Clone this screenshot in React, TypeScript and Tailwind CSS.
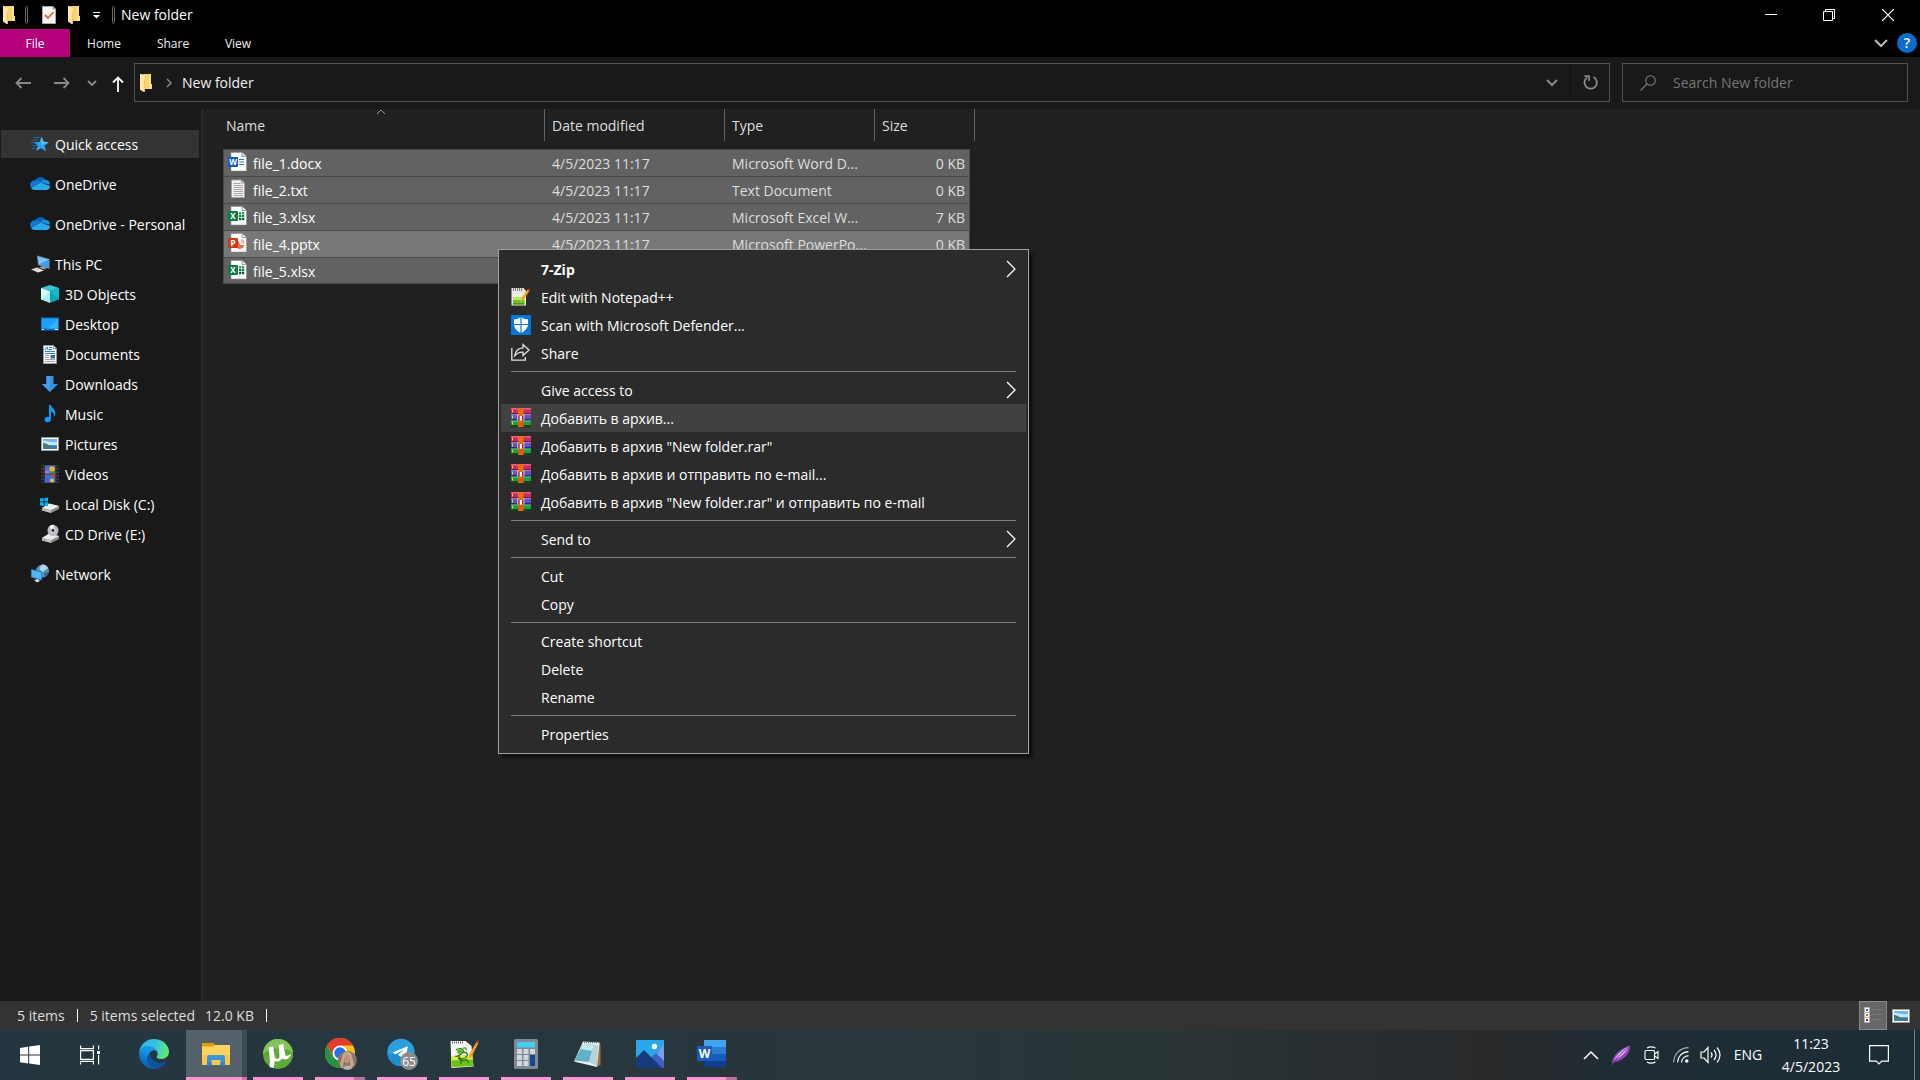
import type { ReactNode } from "react";
import clsx from "clsx";

type IconProps = { className?: string };

/* ---------- small glyphs ---------- */

const FolderIcon = ({ className = "w-3 h-[18px]" }: IconProps) => (
  <svg viewBox="0 0 12 18" className={className} aria-hidden="true">
    <path d="M3 0h8v10h1v5H3z" fill="#f7d471" />
    <path d="M9 0h2v10h1v5H9z" fill="#fbdf8b" />
    <path d="M0 0h2l3 3v14.500L3.500 18 0 15.500z" fill="#ffe9a8" />
    <path d="M3.800 6 5 5v12.500L3.800 18z" fill="#f1c85c" />
  </svg>
);

const CheckDocIcon = () => (
  <svg viewBox="0 0 14 18" className="w-[14px] h-[18px]" aria-hidden="true">
    <path d="M.5.5H11L13.500 3v14.500H.5z" fill="#f7f7f7" stroke="#a9a9a9" />
    <path d="M11 .5V3h2.500" fill="none" stroke="#8d8d8d" />
    <path d="m3 9 3 3 5.500-6" fill="none" stroke="#e8622a" strokeWidth="1.800" />
  </svg>
);

const Chevron = ({ d, box, className, stroke = 1 }: { d: string; box: string; className: string; stroke?: number }) => (
  <svg viewBox={box} className={className} fill="none" stroke="currentColor" strokeWidth={stroke} aria-hidden="true">
    <path d={d} />
  </svg>
);

/* ---------- sidebar icons ---------- */

const QuickAccessIcon = () => (
  <svg viewBox="0 0 20 20" className="w-5 h-5" aria-hidden="true">
    <path d="m11.500 2.500 2 5.300 5.300.4-4.200 3.500 1.500 5.500-4.900-2.900L6 17l1.800-5.300L4 8.400l5.500-.5z" fill="#2aa5f5" />
    <path d="m11.500 2.500 2 5.300 5.300.4-7.600 3z" fill="#5cc0fb" />
    <path d="M3.500 3.500h6M2.500 6h5M1 8.500h4M2.500 11.500h4M1.500 14.500h4" stroke="#1477b8" strokeWidth=".9" />
  </svg>
);

const OneDriveIcon = () => (
  <svg viewBox="0 0 20 20" className="w-5 h-5" aria-hidden="true">
    <path d="M5 7a5.800 5.800 0 0 1 10.600-1.200c-2 .3-3.600 2-4.300 2.700z" fill="#0a5fb4" />
    <path d="M5.600 6.300c2.300-.2 4.200.9 5.700 2L1 13.500A4.600 4.600 0 0 1 5.600 6.300z" fill="#0f78d4" />
    <path d="M10.500 8.500c1.400-2.200 3.200-2.800 5.100-2.700a4.400 4.400 0 0 1 4.300 5z" fill="#1490df" />
    <path d="M1 13.800 10.800 8.500l8.900 3.200A3.200 3.200 0 0 1 17 16H4.500A4 4 0 0 1 1 13.800z" fill="#28a8ea" />
  </svg>
);

const ThisPcIcon = () => (
  <svg viewBox="0 0 20 20" className="w-5 h-5" aria-hidden="true">
    <path d="M7 1.500 19.500 5v10L8 11z" fill="#8a9299" />
    <path d="m8 2.700 10.700 3v8.200L9 10.500z" fill="#3aa0ef" />
    <path d="m8 2.700 10.700 3L9 10z" fill="#79c4fa" />
    <path d="m9 13.500 3-1.200 5 1.700-3 1.500z" fill="#9aa1a6" />
    <path d="m1 15.500 6-2 7 3-6 2z" fill="#dfe4e8" />
    <path d="m3 15.600 4.500-1.400M5.500 16.700l4-1.700" stroke="#9ba4ab" strokeWidth=".5" />
  </svg>
);

const ObjectsIcon = () => (
  <svg viewBox="0 0 20 20" className="w-5 h-5" aria-hidden="true">
    <path d="m10 1 9 3-9 3.500L1 4z" fill="#3bc4d2" />
    <path d="m1 4 9 3.500V19l-9-3.500z" fill="#a9eef2" />
    <path d="m1 4 9 3.500L1 15.500z" fill="#d3f8f8" />
    <path d="m19 4-9 3.500V19l9-3.500z" fill="#0fa3b7" />
    <path d="M19 4v11.500L10 7.500z" fill="#12bcd0" />
  </svg>
);

const DesktopIcon = () => (
  <svg viewBox="0 0 20 20" className="w-5 h-5" aria-hidden="true">
    <path d="M1 3.500h18v13H1z" fill="#0874bd" />
    <path d="M2 4.500h16v10H2z" fill="#18a0fb" />
    <path d="M18 4.500v10H8z" fill="#38b1ff" />
    <path d="M2 15.500h1.500M15 15.500h3" stroke="#fff" />
  </svg>
);

const DocumentsIcon = () => (
  <svg viewBox="0 0 20 20" className="w-5 h-5" aria-hidden="true">
    <path d="M3.500 1.500h10l3 3v15h-13z" fill="#f5f5f5" stroke="#9b9b9b" />
    <path d="M13.500 1.500v3h3" fill="none" stroke="#8d8d8d" />
    <path d="m5 6 2-3 1 3M9 3.500h3M9 5.500h3M5 7.500h10M5 9.500h10" fill="none" stroke="#2b8bd6" />
    <path d="M5 11.500h4M5 13.500h4M5 15.500h10M5 17.500h10" stroke="#a5a5a5" />
    <path d="M10.500 11h4.500v3.500h-4.500z" fill="#3b6f8f" />
  </svg>
);

const DownloadsIcon = () => (
  <svg viewBox="0 0 20 20" className="w-5 h-5" aria-hidden="true">
    <path d="M6.500 2h7v8H18l-8 8-8-8h4.500z" fill="#3492e4" />
    <path d="M6.500 2h3.500v16l-8-8h4.500z" fill="#459fec" />
  </svg>
);

const MusicIcon = () => (
  <svg viewBox="0 0 20 20" className="w-5 h-5" aria-hidden="true">
    <path
      d="M9 1h2c.3 3 4.500 4 4.300 8.200-.1 1.600-.8 2.800-1.600 3.500.6-3-.7-4.500-2.700-5v7.500c0 2-1.700 3.100-3.600 3.100S4.500 17 4.500 15.500c0-2 2.200-3.300 4.500-2.600z"
      fill="#0a9bf5"
    />
  </svg>
);

const PictureIcon = ({ className = "w-5 h-5" }: IconProps) => (
  <svg viewBox="0 0 20 20" className={className} aria-hidden="true">
    <path d="M1.500 3.500h17v13h-17z" fill="#fff" stroke="#9e9e9e" />
    <path d="M3 5h14v10H3z" fill="#6cb7ef" />
    <path d="M3 7c3-1 6 2 14 1v3H3z" fill="#c9e5f7" />
    <path d="M3 9c4 0 5 3 9 2.500h5V13H3z" fill="#3f7f5d" />
    <path d="M3 12.500h14V15H3z" fill="#4379a6" />
  </svg>
);

const VideosIcon = () => (
  <svg viewBox="0 0 20 20" className="w-5 h-5" aria-hidden="true">
    <path d="M1 1h18v18H1z" fill="#3c3c3c" />
    <path d="M2.500 2v16M17.500 2v16" stroke="#141414" strokeWidth="2" strokeDasharray="2 1.500" />
    <path d="M5 1.500h10v8H5zM5 10.500h10v8H5z" fill="#3f6fd0" />
    <path d="M5 6.500h4v3H5z" fill="#c06fc0" />
    <circle cx="12" cy="5" r="2.800" fill="#e5b52c" />
    <path d="M9 7.500h6v2H9z" fill="#3f8d41" />
    <path d="M10 10.500h5V13h-3z" fill="#c9422f" />
    <circle cx="12" cy="16.500" r="2" fill="#f0b93c" />
  </svg>
);

const Drive = () => (
  <>
    <path d="m2 14 7-4.500 10 2.500v3l-8 4-9-2.500z" fill="#8e8e8e" />
    <path d="m2 14 7-4.500L19 12l-8 4z" fill="#ececec" />
    <path d="M2 14.300 11 16.300v2.400l-9-2.300z" fill="#c2c2c2" />
    <path d="M3.500 16h2" stroke="#45c04a" />
  </>
);

const LocalDiskIcon = () => (
  <svg viewBox="0 0 20 20" className="w-5 h-5" aria-hidden="true">
    <Drive />
    <path d="M0 4.500 3.700 4v3.500H0zM4.500 3.900 8 3.500v4H4.500zM0 8.300h3.700V12L0 11.500zM4.500 8.300H8v4l-3.500-.4z" fill="#0db4ef" />
  </svg>
);

const CdDriveIcon = () => (
  <svg viewBox="0 0 20 20" className="w-5 h-5" aria-hidden="true">
    <Drive />
    <circle cx="13" cy="6.500" r="5.500" fill="#b9bcc0" />
    <path d="M13 6.500 9 2.700A5.500 5.500 0 0 1 14.500 1z" fill="#f3f3f3" />
    <circle cx="13" cy="6.500" r="2.500" fill="#ddd" />
    <circle cx="13" cy="6.500" r="1.400" fill="#222" />
  </svg>
);

const NetworkIcon = () => (
  <svg viewBox="0 0 20 20" className="w-5 h-5" aria-hidden="true">
    <circle cx="12.500" cy="7" r="6.500" fill="#5d93b5" />
    <path d="M12 .6a6.500 6.500 0 0 1 6 3.400c-1 2-3 1-4 3s-3 0-4-1.500 1-3 2-4.900z" fill="#b7d4e2" />
    <path d="M14 9c2-1 3.500-1 4.700-1a6.500 6.500 0 0 1-3.700 5z" fill="#2e678c" />
    <path d="m1 5 11 2.500v9L1 13.500z" fill="#1b7cc0" />
    <path d="m1.700 6 9.600 2.200v7.200L1.700 12.800z" fill="#52b6f5" />
    <path d="m4 16 4-1 2 2-3 1.500z" fill="#d4dade" />
  </svg>
);

/* ---------- file icons ---------- */

const OfficeFileIcon = ({ letter, color, children }: { letter: string; color: string; children: ReactNode }) => (
  <svg viewBox="0 0 19 20" className="w-[19px] h-5" aria-hidden="true">
    <path d="M3 .5h11l4.500 4V19H3z" fill="#fff" stroke="#8f8f8f" strokeWidth=".6" />
    <path d="M14 .5v4h4.500" fill="#e8e8e8" stroke="#777" strokeWidth=".7" />
    {children}
    <rect y="5" width="10" height="10" rx="1" fill={color} />
    <text x="5" y="13" textAnchor="middle" fontSize="8" fontWeight="700" fill="#fff">
      {letter}
    </text>
  </svg>
);

const DocxIcon = () => (
  <OfficeFileIcon letter="W" color="#185abd">
    <path d="M11 7.500h5M11 10h5M11 12.500h5" stroke="#2b7cd3" strokeWidth="1.200" />
  </OfficeFileIcon>
);

const XlsxIcon = () => (
  <OfficeFileIcon letter="X" color="#107c41">
    <path d="M11 6h2.300v2.500H11zM14 6h2.300v2.500H14z" fill="#21a366" />
    <path d="M11 9h2.300v2.300H11zM14 9h2.300v2.300H14z" fill="#107c41" />
    <path d="M11 12h2.300v2.300H11zM14 12h2.300v2.300H14z" fill="#0b5a30" />
  </OfficeFileIcon>
);

const PptxIcon = () => (
  <OfficeFileIcon letter="P" color="#c43e1c">
    <path d="M11 8a4 4 0 1 0 5 4h-4z" fill="#ed6c47" />
    <path d="M13 6a4 4 0 0 1 4 4.500h-4z" fill="#ffb49c" />
  </OfficeFileIcon>
);

const TxtIcon = () => (
  <svg viewBox="0 0 19 20" className="w-[19px] h-5" aria-hidden="true">
    <path d="M3.500 1h10l3 3v14.500h-13z" fill="#f3f3f3" stroke="#a0a0a0" strokeWidth=".8" />
    <path d="M13.500 1v3h3" fill="none" stroke="#888" strokeWidth=".8" />
    <path d="M5.500 4.500h7M5.500 6.500h9.500M5.500 8.500h9.500M5.500 10.500h9.500M5.500 12.500h9.500M5.500 14.500h9.500M5.500 16.500h9.500" stroke="#9c9c9c" strokeWidth=".9" />
  </svg>
);

/* ---------- context menu icons ---------- */

const NotepadPlusIcon = () => (
  <svg viewBox="0 0 20 20" className="w-5 h-5" aria-hidden="true">
    <path d="M.5 1h12l2.500 3v14.500H.5z" fill="#e9e9e4" />
    <path d="M2 7h11.500v10.500H2z" fill="#eef5cf" />
    <path d="M2 10h11.500v7.500H2z" fill="#bfe36a" />
    <path d="M2 13h11.500v4.500H2z" fill="#6fc02a" />
    <path d="M2 16h11.500v1.500H2z" fill="#3f9a1e" />
    <path d="M2.500 1v3M4.500 1v3M6.500 1v3M8.500 1v3M10.500 1v3" stroke="#777" />
    <path d="m9.500 15 1-4 6-8.500 2 1.300-6 9z" fill="#f5a617" />
    <path d="m16.500 2.500 1-2 2 1.300-1 2z" fill="#a11c1c" />
  </svg>
);

const DefenderIcon = () => (
  <svg viewBox="0 0 20 20" className="w-5 h-5" aria-hidden="true">
    <path d="M0 0h20v20H0z" fill="#0078d7" />
    <path d="M10 2c2 1.700 4.500 2.300 7 2.300V9c0 4-2.500 7-7 9-4.500-2-7-5-7-9V4.300C5.500 4.300 8 3.700 10 2z" fill="#fff" />
    <path d="M10 1.500V18.500M2.500 9.500h15" stroke="#0078d7" strokeWidth="1.200" />
  </svg>
);

const ShareIcon = () => (
  <svg viewBox="0 0 20 20" className="w-5 h-5" fill="none" stroke="#e6e6e6" strokeWidth="1.300" aria-hidden="true">
    <path d="M.8 5v12.200h13.500V14" />
    <path d="M12 1.500v3.300C7.500 5 4.500 8 3.700 12.800 6 10 8.500 9 12 9.200v3.300L18 7z" />
  </svg>
);

const WinRarIcon = () => (
  <svg viewBox="0 0 20 20" className="w-5 h-5" aria-hidden="true">
    <path d="M0 0h20v6H0z" fill="#cf2a5b" />
    <path d="M0 0h20v1.500H0z" fill="#ef5a80" />
    <path d="M0 5h20v1H0z" fill="#7d1233" />
    <path d="M0 6h20v6H0z" fill="#5a55c8" />
    <path d="M0 6h20v1.200H0z" fill="#8a86e2" />
    <path d="M0 11h20v1.500H0z" fill="#2c2974" />
    <path d="M0 12.500h20V18H0z" fill="#1f9a45" />
    <path d="M0 12.500h20v1.200H0z" fill="#47c26b" />
    <path d="M0 17h20v2.500H0z" fill="#17451f" />
    <path d="M1.500 1.500v3M1.500 7.500v3M1.500 13.700v3" stroke="#f2d32c" />
    <path d="M7 0h5.500v19H7z" fill="#e2701a" />
    <path d="M7 13.500h5.500V18H7z" fill="#d95a10" />
    <path d="M6 6h7.500v6.500H6z" fill="#b9b3d6" />
    <path d="M7.200 5.500h5V8h-5z" fill="#e2701a" />
    <path d="M7.200 8h1.600v4.500H7.200zM10.800 8h1.600v4.500h-1.600z" fill="#cf2020" />
    <path d="M8.800 8h2v4.500h-2z" fill="#fff" />
  </svg>
);

/* ---------- taskbar icons ---------- */

const StartIcon = () => (
  <svg viewBox="0 0 20 20" className="w-5 h-5" fill="#fff" aria-hidden="true">
    <path d="M0 2.900 8.200 1.700v7.900H0zM9.200 1.500 20 0v9.600H9.200zM0 10.600h8.200v7.800L0 17.200zM9.200 10.600H20V20L9.200 18.500z" />
  </svg>
);

const TaskViewIcon = () => (
  <svg viewBox="0 0 20 20" className="w-5 h-5" fill="none" stroke="#fff" strokeWidth="1.200" aria-hidden="true">
    <path d="M.6.500v3.200h12.800V.5M.6 19.500v-3.200h12.800v3.200M.6 5.700h12.800v8.600H.600zM18.600.5v4M18.600 10v9.500" />
    <path d="M17 6h3v3h-3z" fill="#fff" stroke="none" />
  </svg>
);

const EdgeIcon = () => (
  <svg viewBox="0 0 256 256" className="w-[30px] h-[30px]" aria-hidden="true">
    <defs>
      <linearGradient id="edge-dark" x1="60" y1="180" x2="240" y2="180" gradientUnits="userSpaceOnUse">
        <stop offset="0" stopColor="#0c59a4" />
        <stop offset="1" stopColor="#114a8b" />
      </linearGradient>
      <linearGradient id="edge-mid" x1="140" y1="70" x2="40" y2="220" gradientUnits="userSpaceOnUse">
        <stop offset="0" stopColor="#1b9de2" />
        <stop offset=".5" stopColor="#148fdd" />
        <stop offset="1" stopColor="#0a62b8" />
      </linearGradient>
      <linearGradient id="edge-top" x1="20" y1="60" x2="250" y2="130" gradientUnits="userSpaceOnUse">
        <stop offset="0" stopColor="#2fb5e8" />
        <stop offset=".5" stopColor="#36c4dc" />
        <stop offset="1" stopColor="#66eb6e" />
      </linearGradient>
    </defs>
    <g transform="translate(-4.630 -4.920)">
      <path
        fill="url(#edge-dark)"
        d="M235.680 195.460a93.730 93.730 0 0 1-10.540 4.710 101.870 101.870 0 0 1-35.900 6.460c-47.320 0-88.540-32.550-88.540-74.320a31.480 31.480 0 0 1 16.430-27.610c-42.800 1.800-53.800 46.400-53.800 72.530 0 73.880 68.090 81.370 82.760 81.370 7.910 0 19.840-2.300 27-4.560l1.310-.44a128.340 128.340 0 0 0 66.600-52.800 4 4 0 0 0-5.320-5.340z"
      />
      <path
        fill="url(#edge-mid)"
        d="M110.340 246.340A79.200 79.200 0 0 1 87.600 225a80.720 80.720 0 0 1 29.530-120c3.120-1.470 8.450-4.130 15.540-4a32.350 32.350 0 0 1 25.690 13 31.880 31.880 0 0 1 6.360 18.660c0-.21 24.460-79.600-80-79.600-43.900 0-80 41.660-80 78.210a130.150 130.150 0 0 0 12.110 56 128 128 0 0 0 156.380 67.110 75.550 75.550 0 0 1-62.780-8z"
      />
      <path
        fill="url(#edge-top)"
        d="M156.940 153.780c-.81 1.050-3.300 2.500-3.300 5.660 0 2.610 1.700 5.120 4.720 7.230 14.380 10 41.490 8.680 41.560 8.680a59.560 59.560 0 0 0 30.270-8.350 61.380 61.380 0 0 0 30.430-52.880c.26-22.410-8-37.310-11.340-43.910C228.090 28.760 182.350 4.920 132.610 4.920a128 128 0 0 0-128 126.200c.48-36.540 36.800-66.050 80-66.050 3.500 0 23.460.34 42 10.070 16.340 8.580 24.900 18.940 30.850 29.210 6.180 10.670 7.280 24.150 7.280 29.520s-2.740 13.330-7.800 19.910z"
      />
    </g>
  </svg>
);

const ExplorerIcon = () => (
  <svg viewBox="0 0 28 24" className="w-7 h-6" aria-hidden="true">
    <path d="M0 1h11.500l2 2.500-2 2H0z" fill="#e09b06" />
    <path d="M0 4.500h11l2-1.500h15v20H0z" fill="#ffd560" />
    <path d="M0 13h28v10H0z" fill="#fbc945" />
    <path d="M5 24V15.500a2.500 2.500 0 0 1 2.500-2.500h13a2.500 2.500 0 0 1 2.500 2.500V24h-4.500v-6h-9v6z" fill="#3a95dd" />
    <path d="M5 20h4.500v4H5zM18.500 20H23v4h-4.500z" fill="#2b82cb" />
  </svg>
);

const UTorrentIcon = () => (
  <svg viewBox="0 0 30 30" className="w-[30px] h-[30px]" aria-hidden="true">
    <circle cx="15" cy="15" r="15" fill="#5fa936" />
    <path d="M15 0a15 15 0 0 1 15 14C22 8 8 8 0 15A15 15 0 0 1 15 0z" fill="#82c35c" />
    <path
      d="M6.500 28c.8-3 .3-11-1-19.500l4.500-1.300 1.800 10.500c.6 3 3.500 2.800 4.700.3L15.800 6l4.400-1 2 10.500c.5 2 2.500 1.700 5.800-.8-.5 4.300-5 7.300-8.400 4.800-2.800 3.300-5.600 3.700-7.900 2.200-.1 2.800-.4 4.800-1.200 7.300z"
      fill="#fff"
    />
  </svg>
);

const ChromeIcon = () => (
  <svg viewBox="-2 0 34 32" className="w-[34px] h-8" aria-hidden="true">
    <circle cx="15" cy="15" r="15" fill="#fbc116" />
    <path d="M2 7.500A15 15 0 0 1 28 7.500H15L8.500 18.700z" fill="#e33b2e" />
    <path d="M2 7.500 8.500 18.700A7.500 7.500 0 0 0 15 22.500h6.500L15 30A15 15 0 0 1 2 7.500z" fill="#229342" />
    <circle cx="15" cy="15" r="7.500" fill="#fff" />
    <circle cx="15" cy="15" r="5.700" fill="#1a73e8" />
    <circle cx="22.300" cy="22.300" r="9.500" fill="#8d7468" />
    <path d="M17.500 18c1-6 8-6 9.500 0l2 9-3.500 3.500-1-11h-5l-2 11-2.500-4z" fill="#c4aa8c" />
    <ellipse cx="22" cy="21" rx="2.800" ry="4.300" fill="#c98f7c" />
    <path d="M18 30.500c1-4 8-4 9 0a9 9 0 0 1-9 0z" fill="#bdb3ae" />
  </svg>
);

const TelegramIcon = () => (
  <svg viewBox="-2 0 34 32" className="w-[34px] h-8" aria-hidden="true">
    <circle cx="14" cy="14.500" r="13.700" fill="#2aa1de" />
    <path d="M.5 16.500a13.700 13.700 0 0 0 27 0z" fill="#1c8fce" />
    <path d="M5.500 14.500 19.500 8.700c1-.4 1.500.2 1.200 1.300l-2.200 9.500c-.3 1.200-1 1.300-1.900.8L11 17l6-5.500-8.500 4.700z" fill="#fff" />
    <circle cx="22" cy="23" r="9" fill="#8b8b8b" />
    <text x="22" y="27.500" textAnchor="middle" fontSize="12" fill="#fff">
      65
    </text>
  </svg>
);

const NotepadPlusAppIcon = () => (
  <svg viewBox="0 0 30 30" className="w-[30px] h-[30px]" aria-hidden="true">
    <path d="M1.500 2h15l6 5 2 20.500-22 1.500z" fill="#f2f4ee" />
    <path d="m2.200 17 21-1 1 10.800L2.500 28z" fill="#d4ee52" />
    <path d="m2.300 21.500 21.400-1 .7 6.500L2.500 28z" fill="#6cc11a" />
    <path d="M3 3.500h12" stroke="#666" strokeWidth="2" strokeDasharray="1 1" />
    <path d="M7 11c4-3 8-1 7 2s-5 2-4 5 6 2 8-1-3-5-5-3-5 4-7 3M9 19c2 3 6 3 9 1M12 21v4M17 20l3 4" fill="none" stroke="#2f6b1b" strokeWidth="1.200" />
    <path d="M8 12c2-3 7-2 6 1s-6 3-6-1z" fill="#58b52c" />
    <path d="M14 9.500c2-1.500 4 0 3 2" fill="none" stroke="#4aa527" strokeWidth="1.400" />
    <path d="m19.500 20 1-5L27.500 3l2 .8-7 14z" fill="#f2a41c" />
    <path d="m27 3 1.500-2.800 1.500.8-1 3z" fill="#9a3a2a" />
  </svg>
);

const CalculatorIcon = () => (
  <svg viewBox="0 0 24 30" className="w-6 h-[30px]" aria-hidden="true">
    <rect width="24" height="30" rx="1.500" fill="#7f8893" />
    <path d="M3 3h18v5.500H3z" fill="#43cdf5" />
    <path d="M3 10h5v5H3zM9.500 10h5v5h-5zM16 10h5v5h-5zM3 16h5v5H3zM9.500 16h5v5h-5zM3 22h5v5H3zM9.500 22h5v5h-5z" fill="#d2d7dd" />
    <path d="M16 16h5v11h-5z" fill="#164a8f" />
  </svg>
);

const NotepadIcon = () => (
  <svg viewBox="0 0 30 28" className="w-[30px] h-7" aria-hidden="true">
    <path d="m24 2 3.500 2v21L22 27z" fill="#9c7440" />
    <path d="M10 1.500 26.500 2.500 24 27 1 21.500z" fill="#e9f1f2" />
    <path d="M10 4 21 4.500 16 22 1.500 20.500z" fill="#5fb3c4" />
    <path d="M10 4 21 4.500 19 11 7.500 9z" fill="#c6e8ee" />
    <path d="m21 5-5 17 7.500 4L25.500 5z" fill="#b4d5dc" />
    <path d="M11 2.500h14" stroke="#6c7778" strokeWidth="1.500" strokeDasharray="1 1" />
  </svg>
);

const PhotosIcon = () => (
  <svg viewBox="0 0 28 28" className="w-7 h-7" aria-hidden="true">
    <path d="M0 0h28v28H0z" fill="#28a8ea" />
    <path d="M28 4v24H12z" fill="#7f9be6" />
    <path d="m13 20 7-7 8 8v7H13z" fill="#3c62c0" />
    <path d="m0 18 8-8L26 28H0z" fill="#173a7a" />
    <circle cx="18.500" cy="6.500" r="2.700" fill="#fff" />
  </svg>
);

const WordIcon = () => (
  <svg viewBox="0 0 30 28" className="w-[30px] h-7" aria-hidden="true">
    <path d="M7 0h22v7H7z" fill="#41a5ee" />
    <path d="M7 7h22v7H7z" fill="#2b7cd3" />
    <path d="M7 14h22v7H7z" fill="#185abd" />
    <path d="M7 21h22v6H7z" fill="#103f91" />
    <rect y="6" width="15" height="15" rx="1" fill="#185abd" />
    <text x="7.500" y="18" textAnchor="middle" fontSize="12" fontWeight="700" fill="#fff">
      W
    </text>
  </svg>
);

/* ---------- data ---------- */

type Place = { label: string; icon: ReactNode; child?: boolean; gap?: boolean; active?: boolean };

const places: Place[] = [
  { label: "Quick access", icon: <QuickAccessIcon />, active: true },
  { label: "OneDrive", icon: <OneDriveIcon />, gap: true },
  { label: "OneDrive - Personal", icon: <OneDriveIcon />, gap: true },
  { label: "This PC", icon: <ThisPcIcon />, gap: true },
  { label: "3D Objects", icon: <ObjectsIcon />, child: true },
  { label: "Desktop", icon: <DesktopIcon />, child: true },
  { label: "Documents", icon: <DocumentsIcon />, child: true },
  { label: "Downloads", icon: <DownloadsIcon />, child: true },
  { label: "Music", icon: <MusicIcon />, child: true },
  { label: "Pictures", icon: <PictureIcon />, child: true },
  { label: "Videos", icon: <VideosIcon />, child: true },
  { label: "Local Disk (C:)", icon: <LocalDiskIcon />, child: true },
  { label: "CD Drive (E:)", icon: <CdDriveIcon />, child: true },
  { label: "Network", icon: <NetworkIcon />, gap: true },
];

type FileRow = { name: string; icon: ReactNode; modified?: string; type?: string; size?: string; hover?: boolean };

const files: FileRow[] = [
  { name: "file_1.docx", modified: "4/5/2023 11:17", type: "Microsoft Word D...", size: "0 KB", icon: <DocxIcon /> },
  { name: "file_2.txt", modified: "4/5/2023 11:17", type: "Text Document", size: "0 KB", icon: <TxtIcon /> },
  { name: "file_3.xlsx", modified: "4/5/2023 11:17", type: "Microsoft Excel W...", size: "7 KB", icon: <XlsxIcon /> },
  { name: "file_4.pptx", modified: "4/5/2023 11:17", type: "Microsoft PowerPo...", size: "0 KB", icon: <PptxIcon />, hover: true },
  { name: "file_5.xlsx", icon: <XlsxIcon /> },
];

type MenuEntry = { label: string; icon?: ReactNode; bold?: boolean; submenu?: boolean; active?: boolean };

const menuGroups: MenuEntry[][] = [
  [
    { label: "7-Zip", bold: true, submenu: true },
    { label: "Edit with Notepad++", icon: <NotepadPlusIcon /> },
    { label: "Scan with Microsoft Defender...", icon: <DefenderIcon /> },
    { label: "Share", icon: <ShareIcon /> },
  ],
  [
    { label: "Give access to", submenu: true },
    { label: "Добавить в архив...", icon: <WinRarIcon />, active: true },
    { label: 'Добавить в архив "New folder.rar"', icon: <WinRarIcon /> },
    { label: "Добавить в архив и отправить по e-mail...", icon: <WinRarIcon /> },
    { label: 'Добавить в архив "New folder.rar" и отправить по e-mail', icon: <WinRarIcon /> },
  ],
  [{ label: "Send to", submenu: true }],
  [{ label: "Cut" }, { label: "Copy" }],
  [{ label: "Create shortcut" }, { label: "Delete" }, { label: "Rename" }],
  [{ label: "Properties" }],
];

type TaskApp = { label: string; icon: ReactNode; running?: boolean; stacked?: boolean; active?: boolean };

const apps: TaskApp[] = [
  { label: "Microsoft Edge", icon: <EdgeIcon /> },
  { label: "File Explorer", icon: <ExplorerIcon />, active: true },
  { label: "uTorrent", icon: <UTorrentIcon />, running: true },
  { label: "Google Chrome", icon: <ChromeIcon />, running: true, stacked: true },
  { label: "Telegram", icon: <TelegramIcon />, running: true },
  { label: "Notepad++", icon: <NotepadPlusAppIcon />, running: true },
  { label: "Calculator", icon: <CalculatorIcon />, running: true },
  { label: "Notepad", icon: <NotepadIcon />, running: true },
  { label: "Photos", icon: <PhotosIcon />, running: true },
  { label: "Word", icon: <WordIcon />, running: true, stacked: true },
];

/* ---------- sections ---------- */

const TitleBar = () => (
  <header className="flex h-[29px] items-center bg-black pl-[3px] pr-[3px]">
    <FolderIcon />
    <span className="ml-[10px] h-[18px] w-[3px] rounded-full border border-[#666]" />
    <button aria-label="Properties" className="ml-[14px]">
      <CheckDocIcon />
    </button>
    <button aria-label="New folder" className="ml-3">
      <FolderIcon />
    </button>
    <button aria-label="Customize toolbar" className="ml-3 text-white">
      <svg viewBox="0 0 9 8" className="h-2 w-[9px]" aria-hidden="true">
        <path d="M1 1.500h7" stroke="currentColor" />
        <path d="M1 4h7L4.500 7.500z" fill="currentColor" />
      </svg>
    </button>
    <span className="ml-[11px] h-[18px] w-[3px] rounded-full border border-[#666]" />
    <h1 className="ml-[6px] flex-1">New folder</h1>
    <button aria-label="Minimize" className="flex h-full w-[58px] items-center justify-center">
      <svg viewBox="0 0 12 12" className="h-3 w-3" aria-hidden="true">
        <path d="M0 5.500h12" stroke="#fff" />
      </svg>
    </button>
    <button aria-label="Restore" className="flex h-full w-[58px] items-center justify-center">
      <svg viewBox="0 0 12 12" className="h-3 w-3" fill="none" stroke="#fff" aria-hidden="true">
        <path d="M.5 2.500h9v9h-9zM2.500 2.500v-2h9v9h-2" />
      </svg>
    </button>
    <button aria-label="Close" className="flex h-full w-[59px] items-center justify-center">
      <svg viewBox="0 0 12 12" className="h-3 w-3" stroke="#fff" strokeWidth="1.200" aria-hidden="true">
        <path d="m0 0 12 12M12 0 0 12" />
      </svg>
    </button>
  </header>
);

const Ribbon = () => (
  <nav className="flex h-7 items-stretch bg-black pr-[3px] text-[12px] text-[#eee]">
    <button className="w-[70px] bg-[#b4007a] pt-[2px] text-white">File</button>
    <button className="ml-[2px] w-16 pt-[2px]">Home</button>
    <button className="ml-1 w-[66px] pt-[2px]">Share</button>
    <button className="w-16 pt-[2px]">View</button>
    <div className="flex flex-1 items-center justify-end gap-[9px]">
      <button aria-label="Expand the ribbon" className="text-[#bbb]">
        <Chevron box="0 0 14 9" d="m1 1 6 6 6-6" stroke={2} className="h-[9px] w-[14px]" />
      </button>
      <button aria-label="Help" className="flex h-5 w-5 items-center justify-center rounded-full bg-[#0a6cce] text-[14px] font-semibold leading-none text-white">
        ?
      </button>
    </div>
  </nav>
);

const AddressRow = () => (
  <div className="flex h-[52px] items-start bg-[#191919] pr-3 pt-[6px]">
    <div className="flex h-[39px] w-[134px] items-center text-[#8a8a8a]">
      <button aria-label="Back" className="flex w-[46px] justify-center">
        <Chevron box="0 0 16 12" d="M16 6H1.500M6.500 1 1.500 6l5 5" stroke={1.8} className="h-3 w-4" />
      </button>
      <button aria-label="Forward" className="flex w-8 justify-center">
        <Chevron box="0 0 16 12" d="M0 6h14.500M9.500 1l5 5-5 5" stroke={1.8} className="h-3 w-4" />
      </button>
      <button aria-label="Recent locations" className="flex w-7 justify-center">
        <Chevron box="0 0 10 6" d="m1 1 4 4 4-4" stroke={1.8} className="h-[6px] w-[10px]" />
      </button>
      <button aria-label="Up" className="flex w-6 justify-center pt-[3px] text-white">
        <Chevron box="0 0 12 16" d="M6 16V1.500M1 6.500l5-5 5 5" stroke={1.8} className="h-4 w-3" />
      </button>
    </div>
    <div className="flex h-[39px] flex-1 items-stretch border border-[#535353]">
      <div className="flex flex-1 items-center pl-[5px]">
        <FolderIcon />
        <Chevron box="0 0 6 10" d="m1 1 4 4-4 4" stroke={1.5} className="ml-[14px] mr-[10px] h-[10px] w-[6px] text-[#8a8a8a]" />
        <button className="text-[#f0f0f0]">New folder</button>
      </div>
      <button aria-label="Previous locations" className="flex w-[37px] items-center justify-center border-r border-[#121212] text-[#8a8a8a]">
        <Chevron box="0 0 12 8" d="m1 1 5 5 5-5" stroke={2} className="h-2 w-3" />
      </button>
      <button aria-label="Refresh" className="flex w-[38px] items-center justify-center text-[#8a8a8a]">
        <svg viewBox="0 0 15 15" className="h-[15px] w-[15px]" fill="none" stroke="currentColor" strokeWidth="1.800" aria-hidden="true">
          <path d="M10.500 2a6.200 6.200 0 1 1-6.500.5M1.500 1.200h4.500v4.500" />
        </svg>
      </button>
    </div>
    <div className="ml-3 flex h-[39px] w-[286px] items-center border border-[#535353] pl-[17px]">
      <svg viewBox="0 0 16 16" className="h-4 w-4 text-[#7d7d7d]" fill="none" stroke="currentColor" strokeWidth="1.100" aria-hidden="true">
        <circle cx="10.500" cy="5.500" r="4.800" />
        <path d="M7 9 .5 15.500" />
      </svg>
      <input
        type="text"
        aria-label="Search New folder"
        placeholder="Search New folder"
        className="ml-[17px] min-w-0 flex-1 bg-transparent outline-none placeholder:text-[#767676]"
      />
    </div>
  </div>
);

const Sidebar = () => (
  <nav className="w-[203px] shrink-0 border-r-2 border-[#2a2a2a] bg-[#191919] pt-5">
    <ul>
      {places.map((place) => (
        <li key={place.label} className={clsx("flex h-[30px] items-center pl-px pr-[2px]", place.gap && "mt-[10px]")}>
          <button
            className={clsx(
              "flex h-7 w-full items-center gap-[5px] whitespace-nowrap text-white",
              place.child ? "pl-[39px]" : "pl-[29px]",
              place.active && "bg-[#333]"
            )}
          >
            {place.icon}
            <span className="pt-[2px]">{place.label}</span>
          </button>
        </li>
      ))}
    </ul>
  </nav>
);

const headCell = "flex h-8 items-center border-r border-[#636363] pl-[7px] pt-[2px] font-normal";
const bodyCell = "h-[27px] border-t border-[#4a4a4a] p-0 pl-[7px] pt-[2px]";

const FileTable = () => (
  <table className="w-[752px] table-fixed border-separate border-spacing-0 text-left leading-5 text-[#dedede]">
    <colgroup>
      <col className="w-[322px]" />
      <col className="w-[180px]" />
      <col className="w-[150px]" />
      <col className="w-[95px]" />
      <col className="w-[5px]" />
    </colgroup>
    <thead>
      <tr>
        <th className="h-10 p-0 align-top">
          <div className="relative flex h-8 items-center border-r border-[#636363] pl-[3px] pt-[2px] font-normal">
            Name
            <Chevron box="0 0 10 6" d="m1 5 4-4 4 4" className="absolute left-[153px] top-0 h-[6px] w-[10px] text-[#9a9a9a]" />
          </div>
        </th>
        <th className="p-0 align-top">
          <div className={headCell}>Date modified</div>
        </th>
        <th className="p-0 align-top">
          <div className={headCell}>Type</div>
        </th>
        <th className="p-0 align-top">
          <div className="flex h-8 items-center pl-[7px] pt-[2px] font-normal">Size</div>
        </th>
        <th className="p-0 align-top" aria-hidden="true">
          <div className="h-8 border-r border-[#636363]" />
        </th>
      </tr>
    </thead>
    <tbody className="[&>tr:last-child>td:not(:last-child)]:border-b">
      {files.map((file) => (
        <tr key={file.name} className={file.hover ? "[&>td:not(:last-child)]:bg-[#777]" : "[&>td:not(:last-child)]:bg-[#626262]"}>
          <td className="h-[27px] border-l border-t border-[#4a4a4a] p-0 pl-1 align-top">
            <div className="flex h-6 items-center gap-[6px] text-white">
              {file.icon}
              <span className="pt-1">{file.name}</span>
            </div>
          </td>
          <td className={bodyCell}>{file.modified}</td>
          <td className={bodyCell}>{file.type}</td>
          <td className="h-[27px] border-r border-t border-[#4a4a4a] p-0 pr-1 pt-[2px] text-right">{file.size}</td>
          <td className="p-0" />
        </tr>
      ))}
    </tbody>
  </table>
);

const ContextMenu = () => (
  <div
    role="menu"
    className="absolute left-[295px] top-[140px] w-[531px] border border-[#a0a0a0] bg-[#2b2b2b] px-[2px] py-[5px] text-white shadow-[4px_4px_3px_rgba(0,0,0,0.5)]"
  >
    {menuGroups.map((group, i) => (
      <div key={group[0].label}>
        {i > 0 && <hr className="mx-[10px] my-1 border-[#808080]" />}
        {group.map((entry) => (
          <button
            key={entry.label}
            role="menuitem"
            className={clsx(
              "flex h-7 w-full items-center pl-[10px] pr-[10px] text-left",
              entry.bold && "font-bold",
              entry.active && "bg-[#414141]"
            )}
          >
            <span className="mr-[10px] h-5 w-5">{entry.icon}</span>
            <span className="flex-1 pt-[2px]">{entry.label}</span>
            {entry.submenu && <Chevron box="0 0 10 18" d="m1 1 8 8-8 8" stroke={1.3} className="h-[18px] w-[10px]" />}
          </button>
        ))}
      </div>
    ))}
  </div>
);

const StatusBar = () => (
  <footer className="flex h-[29px] items-stretch bg-[#333] pl-[17px] pr-[5px] text-[#dedede]">
    <div className="flex flex-1 items-center">
      <span>5 items</span>
      <span className="ml-3 mr-3 h-[13px] w-px bg-white" />
      <span>5 items selected</span>
      <span className="ml-[10px]">12.0 KB</span>
      <span className="ml-3 h-[13px] w-px bg-white" />
    </div>
    <button aria-label="Details view" className="flex w-7 items-center justify-center border border-[#8a8a8a] bg-[#666]">
      <svg viewBox="0 0 18 17" className="h-[17px] w-[18px]" aria-hidden="true">
        <path d="M.5.500h5v5h-5zM.5 5.500h5v5h-5zM.5 10.500h5v5h-5z" fill="#fff" stroke="#b5b5b5" />
        <path d="M2 2h2v2H2z" fill="#2f75b5" />
        <path d="M2 7h2v2H2z" fill="#a8821e" />
        <path d="M2 12h2v2H2z" fill="#a8281e" />
        <path d="M7 2.500h5M13 2.500h5M7 7.500h5M13 7.500h5M7 12.500h5M13 12.500h5" stroke="#7b7b7b" />
      </svg>
    </button>
    <button aria-label="Large icons view" className="flex w-7 items-center justify-center">
      <PictureIcon />
    </button>
  </footer>
);

const Taskbar = () => (
  <div className="flex h-[50px] items-stretch bg-[linear-gradient(90deg,#23353e_0%,#26373f_20%,#29363b_45%,#2a3537_60%,#28292b_78%,#1f2c34_84%,#1d2d36_100%)] text-white">
    <button aria-label="Start" className="flex w-[60px] items-center justify-center">
      <StartIcon />
    </button>
    <button aria-label="Task view" className="mr-[3px] flex w-[60px] items-center justify-center">
      <TaskViewIcon />
    </button>
    {apps.map((app) => (
      <button key={app.label} aria-label={app.label} className={clsx("flex w-[62px] flex-col", app.active ? "pl-px" : "px-[6px]")}>
        <span className={clsx("flex w-full flex-1", app.active && "bg-[#3e4b53]")}>
          <span className={clsx("flex flex-1 items-center justify-center", app.active && "mr-[1px] bg-[#54616a] pl-[3px]")}>
            {app.icon}
          </span>
          {app.active && <span className="w-1" />}
        </span>
        <span className="flex h-[3px] w-full">
          {(app.running || app.active) && <span className="flex-1 bg-[#ff93d3]" />}
          {app.active && <span className="w-[5px] bg-[#d26fac]" />}
          {app.stacked && <span className="w-[11px] bg-[#bd6f9f]" />}
        </span>
      </button>
    ))}
    <div className="flex flex-1 items-center justify-end">
      <button aria-label="Show hidden icons" className="flex w-[30px] justify-center">
        <Chevron box="0 0 16 9" d="m1 8 7-7 7 7" stroke={1.5} className="h-[9px] w-4" />
      </button>
      <button aria-label="Feather" className="flex w-[30px] justify-center">
        <svg viewBox="0 0 20 20" className="h-5 w-5" aria-hidden="true">
          <path d="M1 19c0-8 7-15 18-18.500C20 8 12 16 4 17z" fill="#9347b5" />
          <path d="M3 15C7 8 12 4 18 1.500 15 8 9 13 3 15z" fill="#dcb2f0" />
          <path d="M.5 20C6 12 11 7 18 2" fill="none" stroke="#7a2fa0" />
        </svg>
      </button>
      <button aria-label="Camera" className="flex w-8 justify-center">
        <svg viewBox="0 0 16 18" className="h-[18px] w-4" fill="none" stroke="#fff" strokeWidth="1.100" aria-hidden="true">
          <rect x="1" y="4.500" width="9.500" height="9" rx="1" />
          <path d="m10.500 8 3.500-2.500v7L10.500 10M3 2c2-1.200 6-1.200 8.500 0M3 16c2 1.200 6 1.200 8.500 0" />
        </svg>
      </button>
      <button aria-label="Network" className="flex w-[26px] justify-center">
        <svg viewBox="0 0 16 16" className="h-4 w-4" fill="none" stroke="#fff" strokeWidth="1.100" aria-hidden="true">
          <path d="M.6 15.500C1 7 7 .8 15.500.6" stroke="#a8b0b4" />
          <path d="M4.500 15.500c.3-6 4.500-10.500 11-10.900M8.500 15.500c.3-3.500 3-6.500 7-6.900" />
          <circle cx="13.800" cy="14" r="1.700" fill="#fff" stroke="none" />
        </svg>
      </button>
      <button aria-label="Volume" className="flex w-8 justify-center">
        <svg viewBox="0 0 21 18" className="h-[18px] w-[21px]" fill="none" stroke="#fff" strokeWidth="1.200" aria-hidden="true">
          <path d="M1 6h3l4-4.500v15L4 12H1z" />
          <path d="M11 6.500c1.300 1.500 1.300 3.500 0 5M14 4c2.500 3 2.500 7 0 10M17 1.500c4 4.500 4 10.500 0 15" />
        </svg>
      </button>
      <button className="w-[44px] text-center">ENG</button>
      <button className="w-[78px] pl-1 text-center leading-[23px]">
        11:23
        <br />
        4/5/2023
      </button>
      <button aria-label="Notifications" className="ml-[6px] flex w-[50px] justify-center">
        <svg viewBox="0 0 20 20" className="h-5 w-5" fill="none" stroke="#fff" strokeWidth="1.200" aria-hidden="true">
          <path d="M.6.600h18.800v15.600h-6.600L10 19l-2.800-2.800H.6z" />
        </svg>
      </button>
      <button aria-label="Show desktop" className="ml-[10px] h-full w-[6px] border-l border-[#7a858b]" />
    </div>
  </div>
);

const App = () => {
  return (
    <div className="flex h-screen flex-col overflow-hidden bg-[#202020] font-['Open_Sans','Noto_Sans',sans-serif] text-[14px] leading-5 text-white">
      <TitleBar />
      <Ribbon />
      <AddressRow />
      <div className="flex min-h-0 flex-1">
        <Sidebar />
        <main className="relative min-w-0 flex-1 bg-[#202020]">
          <div className="px-5">
            <FileTable />
          </div>
          <ContextMenu />
        </main>
      </div>
      <StatusBar />
      <Taskbar />
    </div>
  );
};

export default App;
